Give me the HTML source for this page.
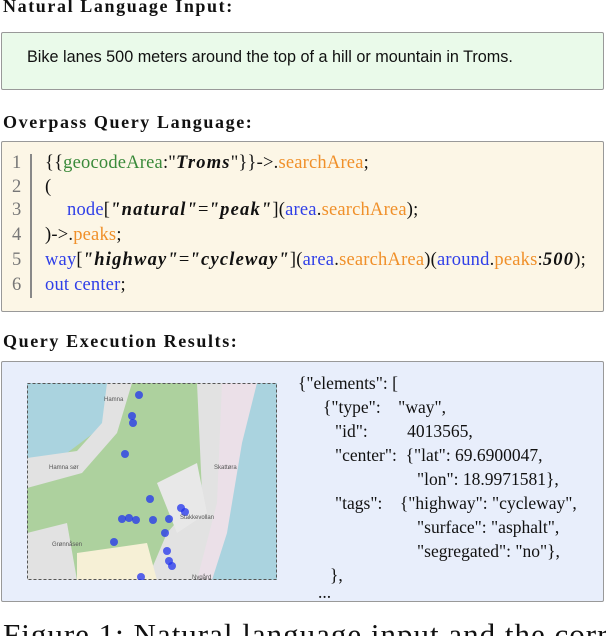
<!DOCTYPE html>
<html><head><style>
body{margin:0;width:606px;height:636px;background:#fff;position:relative;overflow:hidden;font-family:"Liberation Serif",serif;color:#111}
.h{position:absolute;left:3px;font-weight:bold;font-size:18px;letter-spacing:1.6px}
.box{position:absolute;left:1px;width:603px;border:1px solid #999;border-radius:2px;box-sizing:border-box}
.code div{position:absolute;font-size:18.5px;white-space:nowrap;letter-spacing:0.2px}
.n{color:#777}.g{color:#3a8a3a}.o{color:#f0902a}.b{color:#2f3fe8}
.bi{font-weight:bold;font-style:italic;letter-spacing:1.2px}
.j{position:absolute;font-size:17.5px;white-space:nowrap}
</style></head><body>
<div class="h" style="top:-4px">Natural Language Input:</div>
<div class="box" style="top:32px;height:58px;background:#eafaea"></div>
<div style="position:absolute;left:27px;top:48px;font-family:'Liberation Sans',sans-serif;font-size:16.2px">Bike lanes 500 meters around the top of a hill or mountain in Troms.</div>

<div class="h" style="top:112px">Overpass Query Language:</div>
<div class="box" style="top:141px;height:171px;background:#fcf6e6"></div>
<div style="position:absolute;left:30px;top:154px;width:2px;height:144px;background:#888"></div>
<div class="code">
<div class="n" style="left:12px;top:153px">1</div><div style="left:45px;top:153px">{{<span class="g">geocodeArea</span>:"<span class="bi">Troms</span>"}}-&gt;.<span class="o">searchArea</span>;</div>
<div class="n" style="left:12px;top:177px">2</div><div style="left:45px;top:177px">(</div>
<div class="n" style="left:12px;top:200px">3</div><div style="left:67px;top:200px"><span class="b">node</span>[<span class="bi">"natural"</span>=<span class="bi">"peak"</span>](<span class="b">area</span>.<span class="o">searchArea</span>);</div>
<div class="n" style="left:12px;top:225px">4</div><div style="left:45px;top:225px">)-&gt;.<span class="o">peaks</span>;</div>
<div class="n" style="left:12px;top:250px">5</div><div style="left:45px;top:250px"><span class="b">way</span>[<span class="bi">"highway"</span>=<span class="bi">"cycleway"</span>](<span class="b">area</span>.<span class="o">searchArea</span>)(<span class="b">around</span>.<span class="o">peaks</span>:<span class="bi">500</span>);</div>
<div class="n" style="left:12px;top:275px">6</div><div style="left:45px;top:275px"><span class="b">out center</span>;</div>
</div>

<div class="h" style="top:331px">Query Execution Results:</div>
<div class="box" style="top:361px;height:241px;background:#e8eefb"></div>
<svg style="position:absolute;left:27px;top:383px" width="250" height="197" viewBox="0 0 250 197">
<rect width="250" height="197" fill="#aad3df"/>
<path d="M0 80 L40 70 L80 40 L100 0 L200 0 L190 40 L175 100 L170 150 L160 197 L0 197 Z" fill="#add19e"/>
<path d="M0 75 L50 68 L75 40 L80 0 L105 0 L90 50 L55 90 L0 105 Z" fill="#e2e2e2"/>
<path d="M170 0 L200 0 L195 60 L190 140 L175 197 L120 197 L140 150 L175 110 Z" fill="#e2e2e2"/>
<path d="M195 0 L230 0 L215 60 L200 150 L185 197 L170 197 L190 120 Z" fill="#ebe0e8"/>
<path d="M130 100 L170 80 L180 130 L150 150 Z" fill="#e8e8e8"/>
<path d="M50 170 L120 160 L130 197 L50 197 Z" fill="#f6f0d6"/>
<path d="M0 150 L40 140 L50 197 L0 197 Z" fill="#e2e2e2"/>
<rect x="0.5" y="0.5" width="249" height="196" fill="none" stroke="#555" stroke-dasharray="3,2"/>
<g fill="#2233ee" fill-opacity="0.75">
<circle cx="112" cy="12" r="4"/><circle cx="105" cy="33" r="4"/><circle cx="106" cy="40" r="4"/><circle cx="98" cy="71" r="4"/>
<circle cx="123" cy="116" r="4"/><circle cx="95" cy="136" r="4"/><circle cx="102" cy="135" r="4"/><circle cx="109" cy="137" r="4"/>
<circle cx="126" cy="137" r="4"/><circle cx="142" cy="136" r="4"/><circle cx="154" cy="125" r="4"/><circle cx="158" cy="129" r="4"/>
<circle cx="138" cy="150" r="4"/><circle cx="87" cy="159" r="4"/><circle cx="140" cy="168" r="4"/><circle cx="142" cy="178" r="4"/>
<circle cx="145" cy="183" r="4"/><circle cx="114" cy="194" r="4"/>
</g>
<g font-family="Liberation Sans,sans-serif" font-size="6" fill="#555">
<text x="77" y="18">Hamna</text><text x="22" y="86">Hamna sør</text><text x="187" y="86">Skattøra</text>
<text x="153" y="136">Stakkevollan</text><text x="165" y="196">Nygård</text><text x="25" y="163">Grønnåsen</text>
</g>
</svg>
<div class="j" style="left:298px;top:373px">{"elements": [</div>
<div class="j" style="left:323px;top:397px">{"type": &nbsp;&nbsp;&nbsp;"way",</div>
<div class="j" style="left:335px;top:421px">"id": &nbsp;&nbsp;&nbsp;&nbsp;&nbsp;&nbsp;&nbsp;&nbsp;4013565,</div>
<div class="j" style="left:335px;top:445px">"center": &nbsp;{"lat": 69.6900047,</div>
<div class="j" style="left:417px;top:469px">"lon": 18.9971581},</div>
<div class="j" style="left:335px;top:493px">"tags": &nbsp;&nbsp;&nbsp;{"highway": "cycleway",</div>
<div class="j" style="left:417px;top:517px">"surface": "asphalt",</div>
<div class="j" style="left:417px;top:541px">"segregated": "no"},</div>
<div class="j" style="left:330px;top:565px">},</div>
<div class="j" style="left:318px;top:582px">...</div>
<div style="position:absolute;left:0;top:617px;width:606px;height:19px;overflow:hidden"><div style="position:absolute;left:3px;top:0;font-size:31px;white-space:nowrap;letter-spacing:1px">Figure 1: Natural language input and the corresponding</div></div>
</body></html>
